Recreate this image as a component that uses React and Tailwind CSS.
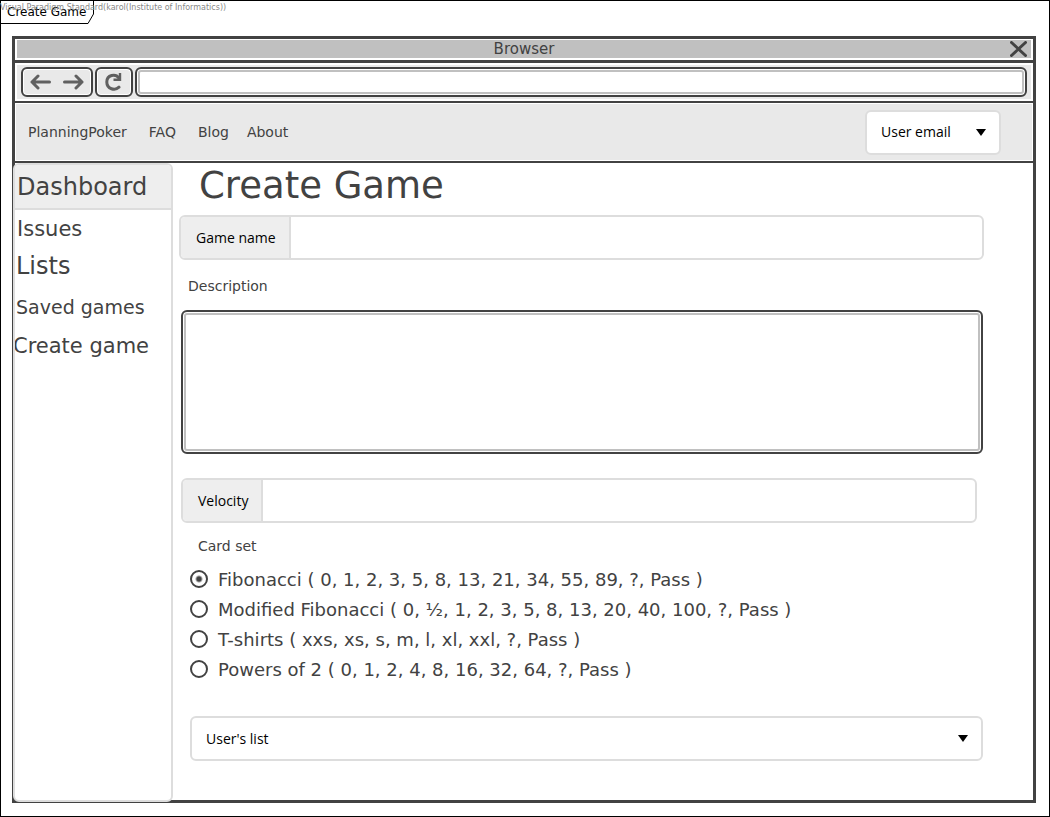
import { useState } from "react";

const cardSets = [
  "Fibonacci ( 0, 1, 2, 3, 5, 8, 13, 21, 34, 55, 89, ?, Pass )",
  "Modified Fibonacci ( 0, ½, 1, 2, 3, 5, 8, 13, 20, 40, 100, ?, Pass )",
  "T-shirts ( xxs, xs, s, m, l, xl, xxl, ?, Pass )",
  "Powers of 2 ( 0, 1, 2, 4, 8, 16, 32, 64, ?, Pass )",
];

function Dropdown({ label, className }) {
  return (
    <div className={`grid items-center ${className}`}>
      <select
        aria-label={label}
        className="col-start-1 row-start-1 h-[45px] w-full appearance-none rounded-md border-2 border-[#dddddd] bg-white px-[14px] pb-px font-['Open_Sans',sans-serif] text-[14px] text-black"
      >
        <option>{label}</option>
      </select>
      <svg
        viewBox="0 0 10 7"
        className="pointer-events-none col-start-1 row-start-1 mr-[15px] h-[7px] w-[10px] justify-self-end"
        aria-hidden="true"
      >
        <path d="M0 0H10L5 7Z" fill="#000" />
      </svg>
    </div>
  );
}

function LabeledInput({ id, label, className = "" }) {
  return (
    <div className={`flex h-[45px] overflow-hidden rounded-md border-2 border-[#dddddd] ${className}`}>
      <label
        htmlFor={id}
        className="flex shrink-0 items-center border-r-2 border-[#dddddd] bg-[#eeeeee] pr-[13px] pb-px pl-[15px] font-['Open_Sans',sans-serif] text-[14px] text-black"
      >
        {label}
      </label>
      <input id={id} type="text" className="min-w-0 flex-1 px-3 text-[14px] outline-none" />
    </div>
  );
}

function Toolbar() {
  return (
    <div className="border-b-2 border-[#424242] p-[2px]">
      <div className="flex h-[34px] items-center gap-[2px] bg-[#e9e9e9] px-1">
        <div className="flex h-[30px] w-[72px] shrink-0 items-center justify-between rounded-md border-2 border-[#424242] bg-[#e9e9e9] px-[7px] shadow-[inset_0_0_0_1px_#ffffff]">
          <button type="button" aria-label="Back">
            <svg width="21" height="16" viewBox="0 0 21 16" fill="none" stroke="#606060" strokeWidth="3" strokeLinecap="round" strokeLinejoin="round">
              <path d="M19.5 8H2M8 2L2 8L8 14" />
            </svg>
          </button>
          <button type="button" aria-label="Forward">
            <svg width="21" height="16" viewBox="0 0 21 16" fill="none" stroke="#606060" strokeWidth="3" strokeLinecap="round" strokeLinejoin="round">
              <path d="M1.5 8H19M13 2L19 8L13 14" />
            </svg>
          </button>
        </div>
        <button
          type="button"
          aria-label="Reload"
          className="flex h-[30px] w-[38px] shrink-0 items-center justify-center rounded-md border-2 border-[#424242] bg-[#e9e9e9] shadow-[inset_0_0_0_1px_#ffffff]"
        >
          <svg width="18" height="18" viewBox="0 0 18 18" fill="none" stroke="#606060" strokeWidth="3">
            <path d="M14 14.2C10 18 1.8 16.2 1.8 9C1.8 1.8 10.5 0.2 14 5" strokeLinecap="round" />
            <path d="M15 0V6.8H8.5" strokeWidth="2.4" />
          </svg>
        </button>
        <input
          type="text"
          aria-label="Address"
          className="h-[30px] min-w-0 flex-1 rounded-md border-2 border-[#424242] bg-white px-2 text-[14px] shadow-[inset_0_0_0_1px_#ffffff,inset_0_0_0_3px_#c0c0c0] outline-none"
        />
      </div>
    </div>
  );
}

function SiteNav() {
  return (
    <header className="border-b-2 border-[#424242] p-px">
      <div className="flex h-14 items-center bg-[#e9e9e9] pr-[31px] pl-3 text-[14px]">
        <nav className="flex flex-1 items-center">
          <a href="#home" className="mr-[22px]">PlanningPoker</a>
          <a href="#faq" className="mr-[22px]">FAQ</a>
          <a href="#blog" className="mr-[18px]">Blog</a>
          <a href="#about">About</a>
        </nav>
        <Dropdown label="User email" className="w-[136px]" />
      </div>
    </header>
  );
}

function Sidebar() {
  return (
    <nav className="-mb-[2px] -ml-[2px] flex w-40 shrink-0 flex-col overflow-hidden rounded-md border-2 border-[#dddddd] bg-white">
      <a href="#dashboard" className="flex h-[45px] items-center border-b-2 border-[#dddddd] bg-[#eeeeee] pl-[2px] text-[24px]">
        Dashboard
      </a>
      <a href="#issues" className="flex h-10 items-center pl-[2px] text-[21px]">Issues</a>
      <a href="#lists" className="flex h-8 items-center pl-px text-[24px]">Lists</a>
      <a href="#saved" className="flex h-[50px] items-center pl-px text-[19px]">Saved games</a>
      <a href="#create" className="-ml-[2px] flex h-[30px] items-center text-[21px]">Create game</a>
    </nav>
  );
}

function GameForm() {
  const [selected, setSelected] = useState(0);
  return (
    <form className="min-w-0 flex-1 pr-[49px] pb-8 pl-[6px]">
      <h1 className="ml-5 h-[52px] text-[37px] leading-[46px]">Create Game</h1>
      <LabeledInput id="game-name" label="Game name" />
      <label htmlFor="description" className="mt-4 ml-[9px] block text-[14px] leading-5">
        Description
      </label>
      <textarea
        id="description"
        className="mt-[14px] ml-[2px] block h-36 w-[calc(100%-3px)] resize-none rounded-md border-2 border-[#424242] bg-white p-2 text-[14px] shadow-[inset_0_0_0_1px_#ffffff,inset_0_0_0_3px_#c0c0c0] outline-none"
      />
      <LabeledInput id="velocity" label="Velocity" className="mt-6 mr-[7px] ml-[2px]" />
      <fieldset className="mt-[13px] ml-[11px]">
        <legend className="ml-2 text-[14px] leading-5">Card set</legend>
        <div className="mt-2">
          {cardSets.map((text, i) => (
            <label key={text} className="flex h-[30px] items-center gap-[10px] text-[18px]">
              <input
                type="radio"
                name="card-set"
                checked={selected === i}
                onChange={() => setSelected(i)}
                className="size-[18px] shrink-0 appearance-none rounded-full border-2 border-[#424242] bg-white checked:bg-[radial-gradient(circle,#424242_2px,#ffffff_4px)]"
              />
              {text}
            </label>
          ))}
        </div>
      </fieldset>
      <Dropdown label="User's list" className="mt-8 mr-px ml-[11px]" />
    </form>
  );
}

export default function App() {
  return (
    <div className="relative flex min-h-screen flex-col border border-black bg-white font-['DejaVu_Sans',sans-serif] text-[#424242]">
      <div className="grid h-[35px] shrink-0">
        <div className="col-start-1 row-start-1 grid h-[23px] w-[94px]">
          <svg className="col-start-1 row-start-1" width="94" height="23" viewBox="0 0 94 23" fill="none" aria-hidden="true">
            <path d="M92.5 0V13L87 22.5H0" stroke="#000" />
          </svg>
          <span className="col-start-1 row-start-1 pl-[6px] text-[12px] leading-[22px] text-black">Create Game</span>
        </div>
        <span className="absolute top-0 -left-px text-[8px] leading-[14px] whitespace-nowrap text-[#888888]">
          Visual Paradigm Standard(karol(Institute of Informatics))
        </span>
      </div>
      <main className="mr-[13px] mb-[13px] ml-[11px] flex flex-1 flex-col border-[3px] border-[#424242]">
        <div className="border-b-[3px] border-[#424242] px-[2px] pt-px pb-[2px]">
          <div className="grid h-[18px] items-center bg-[#c0c0c0]">
            <span className="col-start-1 row-start-1 text-center text-[15px] leading-[18px]">Browser</span>
            <button type="button" aria-label="Close" className="col-start-1 row-start-1 mr-1 justify-self-end">
              <svg width="17" height="16" viewBox="0 0 17 16" fill="none" stroke="#424242" strokeWidth="3" strokeLinecap="round">
                <path d="M1.5 1.5L15.5 14.5M15.5 1.5L1.5 14.5" />
              </svg>
            </button>
          </div>
        </div>
        <Toolbar />
        <SiteNav />
        <div className="flex flex-1">
          <Sidebar />
          <GameForm />
        </div>
      </main>
    </div>
  );
}
